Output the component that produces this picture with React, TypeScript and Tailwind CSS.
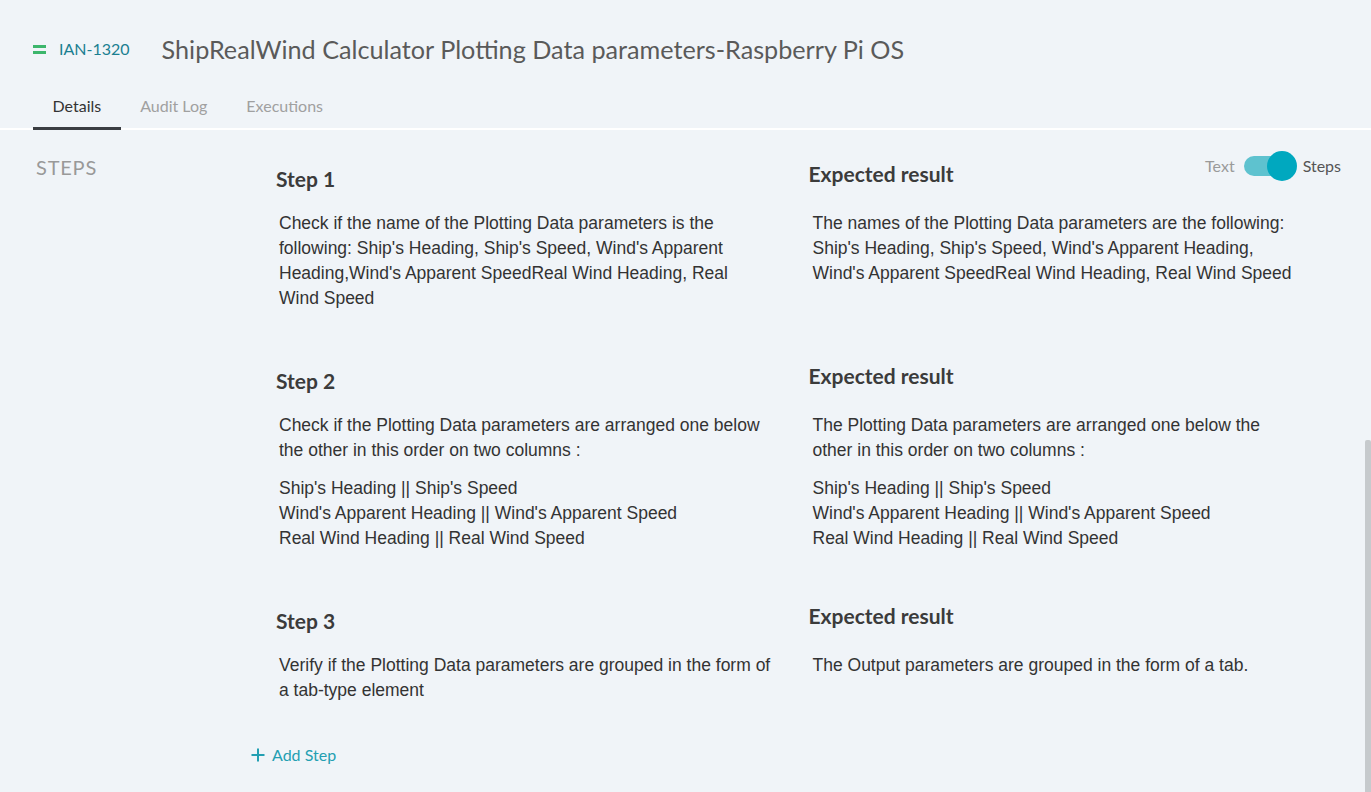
import React from 'react';

const lato = "font-['Lato',sans-serif]";
const arial = "font-['Liberation_Sans',Arial,sans-serif]";

type Step = {
  title: string;
  action: string[];
  expected: string[];
};

const steps: Step[] = [
  {
    title: 'Step 1',
    action: [
      "Check if the name of the Plotting Data parameters is the following: Ship's Heading, Ship's Speed, Wind's Apparent Heading,Wind's Apparent SpeedReal Wind Heading, Real Wind Speed",
    ],
    expected: [
      "The names of the Plotting Data parameters are the following: Ship's Heading, Ship's Speed, Wind's Apparent Heading, Wind's Apparent SpeedReal Wind Heading, Real Wind Speed",
    ],
  },
  {
    title: 'Step 2',
    action: [
      'Check if the Plotting Data parameters are arranged one below the other in this order on two columns :',
      "Ship's Heading || Ship's Speed\nWind's Apparent Heading || Wind's Apparent Speed\nReal Wind Heading || Real Wind Speed",
    ],
    expected: [
      'The Plotting Data parameters are arranged one below the other in this order on two columns :',
      "Ship's Heading || Ship's Speed\nWind's Apparent Heading || Wind's Apparent Speed\nReal Wind Heading || Real Wind Speed",
    ],
  },
  {
    title: 'Step 3',
    action: ['Verify if the Plotting Data parameters are grouped in the form of a tab-type element'],
    expected: ['The Output parameters are grouped in the form of a tab.'],
  },
];

const Paragraphs = ({ items }: { items: string[] }) => (
  <div className={`${arial} text-[17.5px] leading-[25px] text-[#333] max-w-[492px]`}>
    {items.map((p, i) => (
      <p key={i} className={`whitespace-pre-line ${i > 0 ? 'mt-[13px]' : ''}`}>
        {p}
      </p>
    ))}
  </div>
);

const Toggle = () => (
  <div className={`${lato} flex items-center text-[16px]`}>
    <span className="text-[#9a9a9a] mr-[9px]">Text</span>
    <div className="relative w-[53px] h-[30px] flex items-center">
      <div className="w-[48px] h-[20px] rounded-full bg-[#5ec2cf]" />
      <div className="absolute right-0 top-0 w-[30px] h-[30px] rounded-full bg-[#00a8bf]" />
    </div>
    <span className="text-[#555] ml-[6px]">Steps</span>
  </div>
);

export default function App() {
  return (
    <div className="relative h-[792px] w-full overflow-hidden bg-[#f0f4f8]">
      {/* header */}
      <div className="pl-[33px] pt-[34px]">
        <div className="flex items-center h-[30px]">
          <svg width="14" height="10" viewBox="0 0 14 10" className="mr-[12px]">
            <rect x="0" y="1" width="13" height="3" fill="#3cb66c" />
            <rect x="0" y="7" width="13" height="3" fill="#3cb66c" />
          </svg>
          <span className={`${lato} text-[16px] text-[#1b7f91]`}>IAN-1320</span>
          <h1 className={`${lato} ml-[32px] text-[25.2px] text-[#5a5a5a] leading-[30px]`}>
            ShipRealWind Calculator Plotting Data parameters-Raspberry Pi OS
          </h1>
        </div>
      </div>

      {/* tabs */}
      <div className="flex pl-[33px] border-b-2 border-white">
        {['Details', 'Audit Log', 'Executions'].map((t, i) => (
          <div
            key={t}
            className={`${lato} px-[19.5px] pt-[31px] pb-[10px] text-[16px] leading-[22px] -mb-[2px] ${
              i === 0 ? 'text-[#333] border-b-[3px] border-[#3a3d42]' : 'text-[#a0a0a0] border-b-[3px] border-transparent'
            }`}
          >
            {t}
          </div>
        ))}
      </div>

      {/* steps section */}
      <div className="relative flex pt-[21px] pl-[36px]">
        <div className={`${lato} w-[240px] shrink-0 mt-[4px] text-[20px] leading-[24px] text-[#999] tracking-[0.8px]`}>
          STEPS
        </div>

        <div className="flex-1 pr-[30px]">
          {steps.map((s) => (
            <div key={s.title} className="grid grid-cols-2 mb-[42px]">
              <div className="pt-[14px]">
                <h3 className={`${lato} font-bold text-[21px] leading-[28px] text-[#3b3b3b]`}>{s.title}</h3>
                <div className="mt-[18px] pl-[3px]">
                  <Paragraphs items={s.action} />
                </div>
              </div>
              <div className="pt-[9px]">
                <h3 className={`${lato} font-bold text-[21px] leading-[28px] text-[#3b3b3b]`}>Expected result</h3>
                <div className="mt-[23px] pl-[4px]">
                  <Paragraphs items={s.expected} />
                </div>
              </div>
            </div>
          ))}

          <button className={`${lato} -ml-[25px] -mt-[1px] flex items-center text-[16px] leading-[22px] text-[#239fb2]`}>
            <svg width="14" height="14" viewBox="0 0 14 14" className="mr-[7px]">
              <path d="M7 0.5v13M0.5 7h13" stroke="#239fb2" strokeWidth="2" />
            </svg>
            Add Step
          </button>
        </div>

        <div className="absolute right-[30px] top-[21px]">
          <Toggle />
        </div>
      </div>

      {/* scrollbar thumb */}
      <div className="absolute right-0 top-[440px] bottom-0 w-[6px] rounded-t-[2px] bg-[#c6cacd]" />
    </div>
  );
}
